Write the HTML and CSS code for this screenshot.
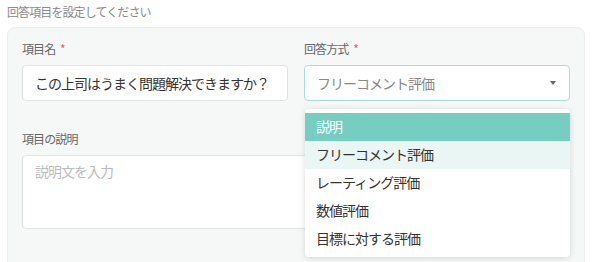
FILE: index.html
```html
<!DOCTYPE html>
<html lang="ja">
<head>
  <meta charset="UTF-8">
  <title>回答項目の設定</title>
  <link rel="stylesheet" href="styles.css">
</head>
<body>

<p class="page-title">回答項目を設定してください</p>

<div class="card">
  <div class="row">
    <div class="field">
      <label class="label">項目名 <span class="req">*</span></label>
      <div class="input">この上司はうまく問題解決できますか？</div>
    </div>
    <div class="field">
      <label class="label">回答方式 <span class="req">*</span></label>
      <div class="select-wrap">
        <div class="select">
          <span>フリーコメント評価</span>
          <span class="caret"></span>
        </div>
        <ul class="menu">
          <li class="selected">説明</li>
          <li class="hover">フリーコメント評価</li>
          <li>レーティング評価</li>
          <li>数値評価</li>
          <li>目標に対する評価</li>
        </ul>
      </div>
    </div>
  </div>

  <div class="field desc">
    <label class="label">項目の説明</label>
    <div class="textarea">説明文を入力</div>
  </div>
</div>

</body>
</html>
```

FILE: styles.css
```css
body {
  margin: 0 15px 0 7px;
  font-family: "Noto Sans CJK JP", "Noto Sans", sans-serif;
  color: #333;
  background: #fff;
}

.page-title {
  margin: 4px 0 8px;
  font-size: 12px;
  letter-spacing: -0.9px;
  line-height: 15px;
  color: #8a8a8a;
}

.card {
  background: #f6f8f8;
  border: 1px solid #eceeee;
  border-radius: 8px;
  padding: 13px 14px 40px;
}

.row {
  display: grid;
  grid-template-columns: 1fr 1fr;
  gap: 16px;
}

.label {
  display: block;
  font-size: 12px;
  letter-spacing: -0.9px;
  line-height: 16px;
  color: #666;
  margin-bottom: 8px;
}

.req {
  color: #e0607a;
  margin-left: 3px;
}

.input, .select, .textarea {
  box-sizing: border-box;
  background: #fff;
  border: 1px solid #e2e4e4;
  border-radius: 4px;
  font-size: 14px;
  letter-spacing: -1px;
}

.input {
  height: 36px;
  line-height: 34px;
  padding: 0 12px;
  color: #333;
}

.select-wrap {
  position: relative;
}

.select {
  height: 36px;
  padding: 0 12px;
  display: flex;
  align-items: center;
  justify-content: space-between;
  border-color: #a6e0d6;
  color: #888;
}

.caret {
  width: 0;
  height: 0;
  border-left: 3px solid transparent;
  border-right: 3px solid transparent;
  border-top: 4px solid #666;
  margin-right: 1px;
}

.menu {
  position: absolute;
  top: 44px;
  left: 1px;
  right: 0;
  margin: 0;
  padding: 4px 0;
  list-style: none;
  background: #fff;
  border-radius: 4px;
  box-shadow: 0 1px 6px rgba(0, 0, 0, 0.14);
  z-index: 2;
}

.menu li {
  height: 28px;
  line-height: 26px;
  padding: 0 11px;
  font-size: 14px;
  letter-spacing: -1px;
  color: #333;
}

.menu li.selected {
  background: #76cec1;
  color: #fff;
}

.menu li.hover {
  background: #e9f6f3;
}

.desc {
  margin-top: 30px;
}

.textarea {
  height: 74px;
  padding: 5px 12px;
  color: #bbb;
  line-height: 20px;
}
```
